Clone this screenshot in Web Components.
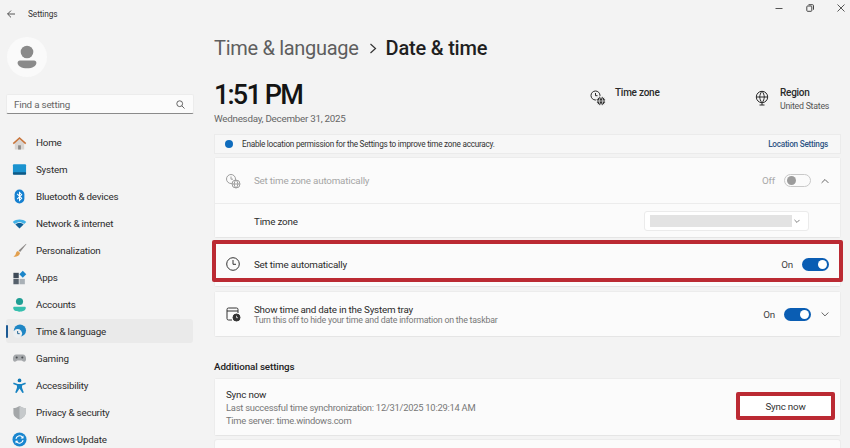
<!DOCTYPE html>
<html lang="en">
<head>
<meta charset="utf-8">
<title>Settings</title>
<style>
  html, body { margin: 0; height: 448px; overflow: hidden; background: #f3f3f3; }
  body { font-family: Roboto, 'Liberation Sans', sans-serif; color: #1b1b1b; letter-spacing: -.2px; }
</style>
</head>
<body>
<settings-app>
  <title-bar slot="top"></title-bar>

  <settings-nav slot="nav">
    <nav-item icon="home">Home</nav-item>
    <nav-item icon="system">System</nav-item>
    <nav-item icon="bluetooth">Bluetooth &amp; devices</nav-item>
    <nav-item icon="network">Network &amp; internet</nav-item>
    <nav-item icon="brush">Personalization</nav-item>
    <nav-item icon="apps">Apps</nav-item>
    <nav-item icon="accounts">Accounts</nav-item>
    <nav-item icon="time" selected>Time &amp; language</nav-item>
    <nav-item icon="gaming">Gaming</nav-item>
    <nav-item icon="access">Accessibility</nav-item>
    <nav-item icon="shield">Privacy &amp; security</nav-item>
    <nav-item icon="update">Windows Update</nav-item>
  </settings-nav>

  <date-time-page slot="main"></date-time-page>
</settings-app>

<script>
const ICONS = {
  home: `<path d="M3 8v7.5h10V8L8 4z" fill="#d9d5d2"/><path d="M6.5 15.500v-4.500h3v4.500z" fill="#8c8a88"/><path d="M.8 8.600 8 2l7.200 6.600-1.100 1.200L8 4.300 1.900 9.800z" fill="#c8743a"/>`,
  system: `<rect x="1" y="2.500" width="14" height="10.500" rx="1" fill="#1b93cf"/><rect x="1" y="11" width="14" height="2.500" rx=".8" fill="#0e5a86"/>`,
  bluetooth: `<rect x="2.800" y=".5" width="10.400" height="15" rx="5.200" fill="#1580d0"/><path d="M5.500 5.300 10.300 10 8 12.300V3.700L10.300 6 5.500 10.700" fill="none" stroke="#fff" stroke-width="1.100"/>`,
  network: `<path d="M.8 6.300C4.800 2.900 11.200 2.900 15.200 6.300L13 8.500C10.200 6.100 5.800 6.100 3 8.500z" fill="#3fb0e6"/><path d="M3.600 9C6.200 6.900 9.800 6.900 12.400 9L8 13.400z" fill="#0f5f96"/>`,
  brush: `<path d="M15 .8 7 8l1.700 1.700L15.300 1.200z" fill="#8d8a88"/><path d="M6.400 8.500c-2 .4-2 2.300-2.500 3.500-.4 1-1.300 1.700-2.300 2.400 3 .7 6.200-.5 7-3.800z" fill="#e2a04f"/>`,
  apps: `<rect x="1.500" y="3" width="5.700" height="5.700" fill="#3e4a57"/><rect x="1.500" y="9.500" width="5.700" height="5.700" fill="#56616c"/><rect x="8" y="9.500" width="5.700" height="5.700" fill="#a9b0b6"/><path d="M11.500 .8 15.200 4.500 11.500 8.200 7.800 4.500z" fill="#1b85c9"/>`,
  accounts: `<circle cx="8" cy="4.800" r="3.800" fill="#1f9e94"/><path d="M2.500 10.500h11c.8 0 1.200.6 1.200 1.300 0 2.400-3 3.900-6.700 3.900s-6.700-1.500-6.700-3.900c0-.7.400-1.300 1.200-1.300z" fill="#35bfae"/>`,
  time: `<circle cx="8.500" cy="7" r="6.500" fill="#1f86c4"/><circle cx="6" cy="10.200" r="4.800" fill="#eceff1"/><path d="M6 7.500v2.800h2.200" fill="none" stroke="#1b5f8e" stroke-width="1"/>`,
  gaming: `<path d="M4.500 3.800h7c2.200 0 3.500 2 3.500 4.600 0 1.700-.8 3-2 3-1.300 0-1.700-1.400-3-1.400H6c-1.300 0-1.700 1.400-3 1.400-1.200 0-2-1.300-2-3 0-2.600 1.300-4.600 3.500-4.600z" fill="#a5a8ab"/><circle cx="5" cy="7" r="1.100" fill="#4a4e52"/><circle cx="11" cy="7" r="1.100" fill="#4a4e52"/>`,
  access: `<circle cx="8" cy="2.600" r="2" fill="#1179b5"/><path d="M1.800 4.800 6 6.300h4l4.200-1.500.6 1.500L10.700 8v2.500l1.900 5-1.500.5L8 11.300 4.900 16l-1.500-.5 1.900-5V8L1.200 6.300z" fill="#1783c2"/>`,
  shield: `<path d="M8 1c2 1.400 4 2.100 6.500 2.300v5c0 3.500-2.600 5.700-6.500 7.200-3.900-1.500-6.500-3.700-6.500-7.200v-5C4 3.100 6 2.400 8 1z" fill="#a3a6a8"/><path d="M8 1c2 1.400 4 2.100 6.500 2.300v5c0 3.500-2.600 5.700-6.500 7.200z" fill="#c6c9cb"/>`,
  update: `<circle cx="8" cy="8" r="7.500" fill="#1a86cf"/><path d="M4.200 7.400A3.900 3.900 0 0 1 11 5.400l.8.900M11.800 8.600A3.900 3.900 0 0 1 5 10.600l-.8-.9" fill="none" stroke="#fff" stroke-width="1.200"/><path d="M12.200 3.800v3h-3zM3.800 12.200v-3h3z" fill="#fff"/>`,
};

const LINE_ICONS = {
  clock: `<circle cx="8" cy="8" r="6.300"/><path d="M8 4v4.300h3"/>`,
  zone: `<circle cx="6" cy="6" r="4.500"/><path d="M6 3.500v2.700h2"/><circle cx="11" cy="11" r="4" fill="#fbfbfb"/><path d="M7 11h8M11 7c-2.400 2.600-2.400 5.400 0 8 2.400-2.600 2.400-5.400 0-8"/>`,
  zonefill: `<circle cx="5.500" cy="5.500" r="4.500"/><path d="M5.500 3v2.700h2"/><circle cx="11" cy="11" r="4.500" fill="#333" stroke="#f3f3f3"/><path d="M6.800 11h8.400M11 7c-2.400 2.600-2.400 5.400 0 8 2.400-2.600 2.400-5.400 0-8" stroke="#f3f3f3" stroke-width=".7"/>`,
  globe: `<circle cx="8" cy="7" r="5.700"/><path d="M2.300 7h11.400M8 1.300C5 4.800 5 9.200 8 12.700c3-3.500 3-7.900 0-11.400M8 12.700v2.300M5.500 15h5"/>`,
  tray: `<path d="M7 14H3.500A1.500 1.500 0 0 1 2 12.500v-9A1.500 1.500 0 0 1 3.500 2h8A1.500 1.500 0 0 1 13 3.500V7M2 5h11"/><circle cx="11.500" cy="11.500" r="3.500" fill="#333"/><path d="M11.500 9.800v1.900h1.500" stroke="#fff" stroke-width=".7"/>`,
};

function lineIcon(name, size) {
  return `<svg width="${size}" height="${size}" viewBox="0 0 16 16" fill="none" stroke="currentColor" stroke-width="1">${LINE_ICONS[name]}</svg>`;
}

class SettingsApp extends HTMLElement {
  constructor() {
    super();
    this.attachShadow({ mode: 'open' }).innerHTML = `
    <style>
      :host { display: grid; grid-template-columns: 205px 1fr; grid-template-rows: 28px 420px; width: 850px; height: 448px; overflow: hidden; }
      .top { grid-column: 1 / 3; }
    </style>
    <div class="top"><slot name="top"></slot></div>
    <slot name="nav"></slot>
    <slot name="main"></slot>`;
  }
}

class TitleBar extends HTMLElement {
  constructor() {
    super();
    this.attachShadow({ mode: 'open' }).innerHTML = `
    <style>
      :host { display: flex; align-items: center; height: 28px; padding-left: 7px; font-size: 8.300px; letter-spacing: -.1px; color: #333; }
      .back { margin-right: 13px; display: flex; }
      .controls { margin-left: auto; display: flex; gap: 23px; margin-right: 5px; margin-top: -12px; }
      svg { display: block; }
    </style>
    <span class="back"><svg width="8" height="8" viewBox="0 0 8 8" fill="none" stroke="#444" stroke-width=".9"><path d="M4 .6.600 4 4 7.400M.6 4H8"/></svg></span>
    <span>Settings</span>
    <span class="controls">
      <svg width="8" height="8" viewBox="0 0 8 8" fill="none" stroke="#555" stroke-width="1"><path d="M.5 4.500h7"/></svg>
      <svg width="8" height="8" viewBox="0 0 8 8" fill="none" stroke="#444" stroke-width="1"><rect x=".8" y="2" width="5" height="5.300" rx=".8"/><path d="M2.500.7h4a1 1 0 0 1 1 1v4"/></svg>
      <svg width="8" height="8" viewBox="0 0 8 8" fill="none" stroke="#444" stroke-width=".9"><path d="M.5.500l7 7M7.500.500l-7 7"/></svg>
    </span>`;
  }
}

class SettingsNav extends HTMLElement {
  constructor() {
    super();
    this.attachShadow({ mode: 'open' }).innerHTML = `
    <style>
      :host { display: block; padding: 9px 12px 0 6px; }
      .avatar { width: 40px; height: 40px; margin-left: 1px; border-radius: 50%; background: #fafafa; display: flex; align-items: center; justify-content: center; }
      .search { margin: 17px 0 16px 0; height: 18px; display: flex; align-items: center; justify-content: space-between; padding: 0 8px 0 7px; background: #fbfbfb; border: 1px solid #ececec; border-bottom: 1px solid #8a8a8a; border-radius: 2px; font-size: 9.800px; color: #666; box-sizing: content-box; width: 171px; }
      .items { display: flex; flex-direction: column; gap: 3px; }
    </style>
    <div class="avatar">
      <svg width="20" height="24" viewBox="0 0 20 24" fill="#8a8a8a"><circle cx="10" cy="7" r="6.300"/><path d="M3 15.500h14c1.600 0 2.400 1.200 2.400 2.500 0 3-4 5.300-9.400 5.300S.6 21 .6 18c0-1.300.8-2.500 2.400-2.500z"/></svg>
    </div>
    <div class="search">
      <span>Find a setting</span>
      <svg width="9" height="9" viewBox="0 0 9 9" fill="none" stroke="#555" stroke-width=".9"><circle cx="3.700" cy="3.700" r="2.900"/><path d="M5.800 5.800 8.500 8.500"/></svg>
    </div>
    <div class="items"><slot></slot></div>`;
  }
}

class NavItem extends HTMLElement {
  constructor() {
    super();
    const selected = this.hasAttribute('selected');
    this.attachShadow({ mode: 'open' }).innerHTML = `
    <style>
      :host { display: flex; align-items: center; height: 24px; position: relative; font-size: 9.800px; color: #2b2b2b; border-radius: 3px; ${selected ? 'background: #eaeaea;' : ''} }
      svg { margin: 0 9px 0 6px; flex: none; }
      .bar { position: absolute; left: 0; top: 6px; width: 2px; height: 13px; background: #1c5a94; border-radius: 1px; }
    </style>
    ${selected ? '<span class="bar"></span>' : ''}
    <svg width="15" height="15" viewBox="0 0 16 16">${ICONS[this.getAttribute('icon')]}</svg>
    <slot></slot>`;
  }
}

class ToggleSwitch extends HTMLElement {
  constructor() {
    super();
    const on = this.hasAttribute('on');
    this.attachShadow({ mode: 'open' }).innerHTML = `
    <style>
      :host { display: flex; align-items: center; gap: 9px; font-size: 9.800px; color: ${on ? '#444' : '#a9a9a9'}; }
      .track { width: 27px; height: 13px; box-sizing: border-box; border-radius: 7px; display: flex; align-items: center; padding: 0 2px;
        ${on ? 'background: #0a5db3; justify-content: flex-end;' : 'border: 1px solid #c9c9c9;'} }
      .knob { width: 9px; height: 9px; border-radius: 50%; background: ${on ? '#fff' : '#9c9c9c'}; }
    </style>
    <span>${on ? 'On' : 'Off'}</span>
    <span class="track"><span class="knob"></span></span>`;
  }
}

class RedMark extends HTMLElement {
  constructor() {
    super();
    this.attachShadow({ mode: 'open' }).innerHTML = `
    <style>
      :host { display: block; position: absolute; box-sizing: border-box; border: 4px solid #bb2a33; border-radius: 2px; pointer-events: none; }
    </style>`;
  }
}

class SettingRow extends HTMLElement {
  constructor() {
    super();
    const icon = this.getAttribute('icon');
    const bare = this.hasAttribute('bare');
    this.attachShadow({ mode: 'open' }).innerHTML = `
    <style>
      :host { display: flex; align-items: center; position: relative; box-sizing: border-box; padding: 0 11px 0 ${bare ? 11 : 10}px; background: #fbfbfb; font-size: 9.800px; color: #2b2b2b; }
      .icon { width: 29px; flex: none; display: flex; color: ${this.hasAttribute('dim') ? '#9e9e9e' : '#333'}; }
      .text { flex: 1; min-width: 0; }
      .end { display: flex; align-items: center; }
    </style>
    ${bare ? '' : `<span class="icon">${icon ? lineIcon(icon, 16) : ''}</span>`}
    <div class="text"><slot></slot></div>
    <div class="end"><slot name="end"></slot></div>`;
  }
}

class DateTimePage extends HTMLElement {
  constructor() {
    super();
    const chevDown = '<svg class="chev" width="8" height="8" viewBox="0 0 8 8" fill="none" stroke="#555" stroke-width=".9"><path d="M.6 2.500 4 5.900 7.400 2.500"/></svg>';
    const chevUp = '<svg class="chev" width="8" height="8" viewBox="0 0 8 8" fill="none" stroke="#555" stroke-width=".9"><path d="M.6 5.900 4 2.500 7.400 5.900"/></svg>';
    const chevSmall = '<svg width="6" height="6" viewBox="0 0 8 8" fill="none" stroke="#666" stroke-width="1.100"><path d="M.6 2.500 4 5.900 7.400 2.500"/></svg>';
    this.attachShadow({ mode: 'open' }).innerHTML = `
    <style>
      :host { display: block; padding: 0 9px; }
      h1 { margin: 0; height: 40px; display: flex; align-items: center; font-size: 20px; font-weight: 400; letter-spacing: -.3px; color: #5e5e5e; }
      h1 b { font-weight: 500; color: #1f1f1f; letter-spacing: -.2px; }
      h1 svg { margin: 0 9px 0 10px; }
      .clock { display: flex; height: 54px; margin-top: 12px; }
      .now { flex: 1; }
      .big { font-size: 27px; font-weight: 500; line-height: 30px; letter-spacing: -1.800px; color: #141414; }
      .date { font-size: 9.800px; letter-spacing: -.25px; color: #666; margin-top: 3px; }
      .fact { display: flex; gap: 9px; font-size: 10px; font-weight: 500; line-height: 13px; letter-spacing: -.25px; color: #2a2a2a; white-space: nowrap; box-sizing: border-box; }
      .fact svg { margin-top: 4px; flex: none; }
      .fact small { display: block; font-size: 8.800px; line-height: 14px; letter-spacing: -.25px; font-weight: 400; color: #555; }
      .tz { width: 164px; padding-top: 6px; }
      .rg { width: 87px; padding-top: 6px; gap: 10px; }
      .info { height: 20px; display: flex; align-items: center; box-sizing: border-box; padding: 0 12px 0 10px; background: #f7f7f7; border: 1px solid #ebebeb; font-size: 8.200px; letter-spacing: -.25px; color: #333; width: 627px; }
      .dot { width: 8px; height: 8px; border-radius: 50%; background: #0f6cbd; margin-right: 9px; flex: none; }
      .info a { margin-left: auto; color: #2f5585; font-weight: 500; }
      .group { margin-top: 3px; border: 1px solid #ececec; border-bottom-color: #e5e5e5; border-radius: 3px; width: 627px; box-sizing: border-box; }
      .group setting-row + setting-row { border-top: 1px solid #ececec; padding-top: 1px; }
      .card { display: flex; margin-top: 4px; border: 1px solid #ececec; border-bottom-color: #e5e5e5; border-radius: 3px; width: 627px; box-sizing: border-box; }
      .card setting-row { flex: 1; }
      .muted { color: #a6a6a6; }
      .sub { font-size: 8.800px; color: #777; }
      .chev { margin-left: 10px; }
      .select { width: 165px; height: 20px; box-sizing: border-box; margin-right: 20px; display: flex; align-items: center; padding: 0 4px 0 5px; background: #fff; border: 1px solid #ebebeb; border-radius: 3px; }
      .select i { display: block; width: 142px; height: 12px; background: #e3e3e3; }
      .select svg { margin-left: 2px; }
      h2 { margin: 23px 0 4px; font-size: 9.800px; line-height: 14px; letter-spacing: -.1px; font-weight: 500; color: #222; }
      .sync p { margin: 0; line-height: 13px; }
      .sync .sub { font-size: 9.400px; letter-spacing: -.25px; }
      .btn { position: relative; width: 91px; height: 20px; margin: 0 -2px 2px 0; display: flex; align-items: center; justify-content: center; background: #fff; font-size: 9.800px; color: #333; }
      red-mark.btn-mark { inset: -4px; }
      red-mark.row-mark { top: -2px; left: -3px; right: -3px; bottom: 4px; }
      .stub { height: 20px; margin-top: 3px; background: #fbfbfb; }
      .hold { display: flex; align-items: center; }
    </style>
    <h1>Time &amp; language<svg width="8" height="11" viewBox="0 0 8 11" fill="none" stroke="#333" stroke-width="1.200"><path d="M1.500 1 6.500 5.500 1.500 10"/></svg><b>Date &amp; time</b></h1>

    <div class="clock">
      <div class="now">
        <div class="big">1:51 PM</div>
        <div class="date">Wednesday, December 31, 2025</div>
      </div>
      <div class="fact tz">${lineIcon('zonefill', 16)}<span>Time zone</span></div>
      <div class="fact rg">${lineIcon('globe', 16)}<span>Region<small>United States</small></span></div>
    </div>

    <div class="info"><span class="dot"></span>Enable location permission for the Settings to improve time zone accuracy.<a>Location Settings</a></div>

    <div class="group">
      <setting-row icon="zone" dim style="height:45px"><span class="muted">Set time zone automatically</span><span slot="end" class="hold"><toggle-switch></toggle-switch>${chevUp}</span></setting-row>
      <setting-row style="height:34px">Time zone<span slot="end" class="select"><i></i>${chevSmall}</span></setting-row>
    </div>

    <div class="card" style="position:relative;height:46px;margin-top:3px">
      <setting-row icon="clock">Set time automatically<toggle-switch slot="end" on></toggle-switch></setting-row>
      <red-mark class="row-mark"></red-mark>
    </div>

    <div class="card" style="height:46px">
      <setting-row icon="tray">Show time and date in the System tray<div class="sub">Turn this off to hide your time and date information on the taskbar</div><span slot="end" class="hold"><toggle-switch on></toggle-switch>${chevDown}</span></setting-row>
    </div>

    <h2>Additional settings</h2>

    <div class="card" style="height:58px">
      <setting-row bare>
        <div class="sync"><p>Sync now</p><p class="sub">Last successful time synchronization: 12/31/2025 10:29:14 AM</p><p class="sub">Time server: time.windows.com</p></div>
        <span slot="end" class="btn">Sync now<red-mark class="btn-mark"></red-mark></span>
      </setting-row>
    </div>
    <div class="card stub"></div>`;
  }
}

customElements.define('settings-app', SettingsApp);
customElements.define('title-bar', TitleBar);
customElements.define('settings-nav', SettingsNav);
customElements.define('nav-item', NavItem);
customElements.define('toggle-switch', ToggleSwitch);
customElements.define('red-mark', RedMark);
customElements.define('setting-row', SettingRow);
customElements.define('date-time-page', DateTimePage);
</script>
</body>
</html>
